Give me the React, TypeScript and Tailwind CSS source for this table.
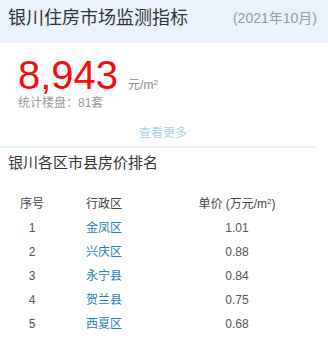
const font = { fontFamily: '"Liberation Sans", "Noto Sans CJK SC", sans-serif' }

const rows = [
  { rank: 1, name: '金凤区', price: '1.01' },
  { rank: 2, name: '兴庆区', price: '0.88' },
  { rank: 3, name: '永宁县', price: '0.84' },
  { rank: 4, name: '贺兰县', price: '0.75' },
  { rank: 5, name: '西夏区', price: '0.68' },
]

export default function App() {
  return (
    <div className="w-[328px] h-[338px] bg-white overflow-hidden" style={font}>
      <div className="h-[43px] bg-[#eaf2fb] flex items-center justify-between pl-2 pr-[11px] pb-[6px]">
        <span className="text-[18px] text-[#333]">银川住房市场监测指标</span>
        <span className="text-[14px] text-[#999]">(2021年10月)</span>
      </div>

      <div className="pl-[18px] pt-[12px]">
        <div className="flex items-baseline">
          <span className="text-[40px] leading-[40px] text-[#f40d0d]">8,943</span>
          <span className="ml-[10px] text-[12px] text-[#888]">
            元/m<sup className="text-[8px]">2</sup>
          </span>
        </div>
        <div className="text-[12px] leading-[16px] text-[#999]">统计楼盘：81套</div>
      </div>

      <div className="mt-[14px] text-center text-[12px] leading-[16px] text-[#a9d3e8] pr-[2px]">查看更多</div>
      <div className="mt-[5px] h-[2px] w-[316px] bg-[#e9f3fa]" />

      <div className="mt-[5px] pl-2 text-[15px] leading-[20px] text-[#333]">银川各区市县房价排名</div>

      <div className="mt-[18px] text-[12px] text-[#444]">
        <div className="grid grid-cols-[48px_94px_174px] ml-2 h-[25px] items-center">
          <span className="text-center">序号</span>
          <span className="pl-[30px]">行政区</span>
          <span className="text-center">
            单价 (万元/m<sup className="text-[8px]">2</sup>)
          </span>
        </div>
        {rows.map(r => (
          <div key={r.rank} className="grid grid-cols-[48px_94px_174px] ml-2 h-[24px] items-center">
            <span className="text-center text-[#555]">{r.rank}</span>
            <span className="pl-[30px] text-[#2a7fb0]">{r.name}</span>
            <span className="text-center text-[#555]">{r.price}</span>
          </div>
        ))}
      </div>
    </div>
  )
}
